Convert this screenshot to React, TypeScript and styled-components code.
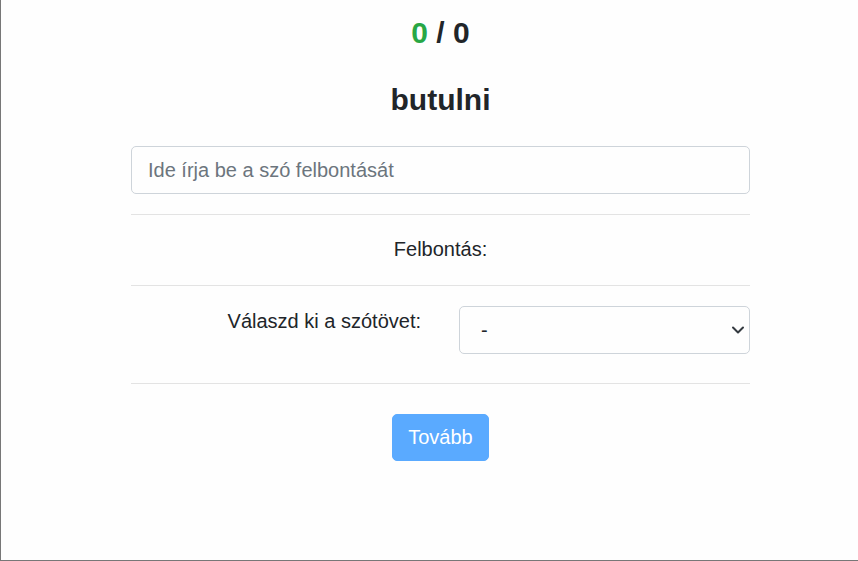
import React from "react";
import styled, { createGlobalStyle } from "styled-components";

const Global = createGlobalStyle`
  html, body { margin: 0; padding: 0; background: #fefefe; }
  * { box-sizing: border-box; }
  body { font-family: "Liberation Sans", Arial, sans-serif; color: #212529; }
`;

const Frame = styled.div`
  height: 561px;
  border-left: 1px solid #777;
  border-bottom: 1px solid #777;
  background: #fefefe;
  padding-top: 15px;
`;

const Content = styled.div`
  width: 619px;
  margin-left: 130px;
  display: flex;
  flex-direction: column;
`;

const Score = styled.div`
  text-align: center;
  font-size: 30px;
  font-weight: 700;
  line-height: 36px;
`;

const Good = styled.span`
  color: #28a745;
`;

const Word = styled.h3`
  margin: 31px 0 28px;
  text-align: center;
  font-size: 30px;
  line-height: 36px;
  font-weight: 700;
`;

const TextInput = styled.input`
  width: 100%;
  height: 48px;
  border: 1px solid #ced4da;
  border-radius: 5px;
  padding: 0 16px;
  font-family: inherit;
  font-size: 20px;
  color: #495057;
  background: #fefefe;
  outline: none;
  &::placeholder { color: #6c757d; }
`;

const Rule = styled.hr<{ $top: number; $bottom: number }>`
  border: 0;
  border-top: 1px solid #e3e3e3;
  margin: ${(p) => p.$top}px 0 ${(p) => p.$bottom}px;
  width: 100%;
`;

const Centered = styled.div`
  text-align: center;
  font-size: 20px;
  line-height: 30px;
`;

const FormRow = styled.div`
  display: grid;
  grid-template-columns: 290px 291px;
  column-gap: 38px;
  align-items: start;
`;

const Label = styled.label`
  text-align: right;
  font-size: 20px;
  line-height: 30px;
`;

const SelectWrap = styled.div`
  position: relative;
`;

const Select = styled.select`
  appearance: none;
  -webkit-appearance: none;
  width: 100%;
  height: 48px;
  border: 1px solid #ced4da;
  border-radius: 5px;
  padding: 0 40px 0 21px;
  font-family: inherit;
  font-size: 20px;
  color: #212529;
  background: #fefefe;
  outline: none;
`;

const Chevron = styled.svg`
  position: absolute;
  right: 5px;
  top: 18px;
  width: 14px;
  height: 12px;
  pointer-events: none;
`;

const ButtonRow = styled.div`
  display: flex;
  justify-content: center;
`;

const Button = styled.button`
  height: 47px;
  padding: 0 15px;
  border: 1px solid #5aaaff;
  border-radius: 5px;
  background: #5aaaff;
  color: #fff;
  font-family: inherit;
  font-size: 20px;
  cursor: default;
`;

export default function App() {
  return (
    <>
      <Global />
      <Frame>
        <Content>
          <Score>
            <Good>0</Good> / 0
          </Score>
          <Word>butulni</Word>
          <TextInput placeholder="Ide írja be a szó felbontását" />
          <Rule $top={20} $bottom={19} />
          <Centered>Felbontás:</Centered>
          <Rule $top={21} $bottom={20} />
          <FormRow>
            <Label>Válaszd ki a szótövet:</Label>
            <SelectWrap>
              <Select defaultValue="-">
                <option value="-">-</option>
              </Select>
              <Chevron viewBox="0 0 14 12">
                <path d="M2 3.5 L7 8.5 L12 3.5" fill="none" stroke="#343a40" strokeWidth="2" strokeLinecap="round" strokeLinejoin="round" />
              </Chevron>
            </SelectWrap>
          </FormRow>
          <Rule $top={29} $bottom={30} />
          <ButtonRow>
            <Button disabled>Tovább</Button>
          </ButtonRow>
        </Content>
      </Frame>
    </>
  );
}
